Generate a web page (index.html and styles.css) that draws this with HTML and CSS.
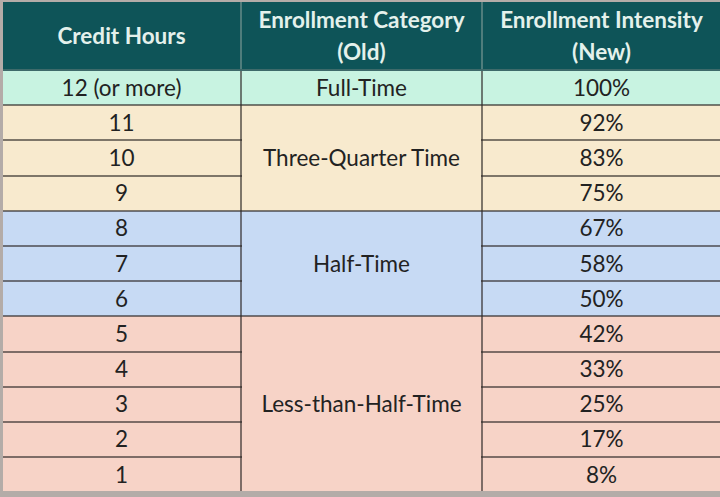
FILE: index.html
```html
<!DOCTYPE html>
<html>
<head>
<meta charset="utf-8">
<link rel="stylesheet" href="styles.css">
</head>
<body>
<div class="frame">
<table class="tbl">
  <colgroup><col class="c1"><col class="c2"><col class="c3"></colgroup>
  <thead>
    <tr class="head">
      <th>Credit Hours</th>
      <th>Enrollment Category<br>(Old)</th>
      <th>Enrollment Intensity<br>(New)</th>
    </tr>
  </thead>
  <tbody>
    <tr class="full"><td>12 (or more)</td><td>Full-Time</td><td>100%</td></tr>
    <tr class="tq"><td>11</td><td rowspan="3" class="cat">Three-Quarter Time</td><td>92%</td></tr>
    <tr class="tq"><td>10</td><td>83%</td></tr>
    <tr class="tq"><td>9</td><td>75%</td></tr>
    <tr class="half"><td>8</td><td rowspan="3" class="cat">Half-Time</td><td>67%</td></tr>
    <tr class="half"><td>7</td><td>58%</td></tr>
    <tr class="half"><td>6</td><td>50%</td></tr>
    <tr class="less"><td>5</td><td rowspan="5" class="cat">Less-than-Half-Time</td><td>42%</td></tr>
    <tr class="less"><td>4</td><td>33%</td></tr>
    <tr class="less"><td>3</td><td>25%</td></tr>
    <tr class="less"><td>2</td><td>17%</td></tr>
    <tr class="less"><td>1</td><td>8%</td></tr>
  </tbody>
</table>
</div>
</body>
</html>
```
FILE: styles.css
```css
html, body {
  margin: 0;
  padding: 0;
  background: #b4aca8;
}
.frame {
  width: 717px;
  height: 491px;
  margin-left: 3px;
  padding-top: 2px;
  padding-bottom: 4px;
  background: #b4aca8;
  overflow: hidden;
}
.tbl {
  width: 717px;
  border-collapse: collapse;
  table-layout: fixed;
  font-family: Lato, "Open Sans", sans-serif;
  font-size: 22.5px;
  color: #222;
}
.c1 { width: 238px; }
.c2 { width: 241px; }
.c3 { width: 238px; }
.tbl th, .tbl td {
  text-align: center;
  vertical-align: middle;
  padding: 0;
  border: 2px solid rgba(45, 40, 38, 0.6);
}
.tbl tr > :first-child { border-left: none; }
.tbl tr > :last-child { border-right: none; }
.tbl tbody tr:last-child td, .tbl td.cat[rowspan="5"] { border-bottom: none; }
.head th {
  background: #0e5458;
  color: #e4f1ec;
  font-weight: 700;
  height: 67px;
  line-height: 32px;
  border-top: none;
  border-color: #4f7d7c;
  border-bottom-color: #3e6a6a;
}
.tbl td { height: 33.2px; line-height: 24px; }
.full td { background: #c8f3e1; }
.tq td { background: #f8eace; }
.half td { background: #c7daf4; }
.less td { background: #f7d3c7; }
```
